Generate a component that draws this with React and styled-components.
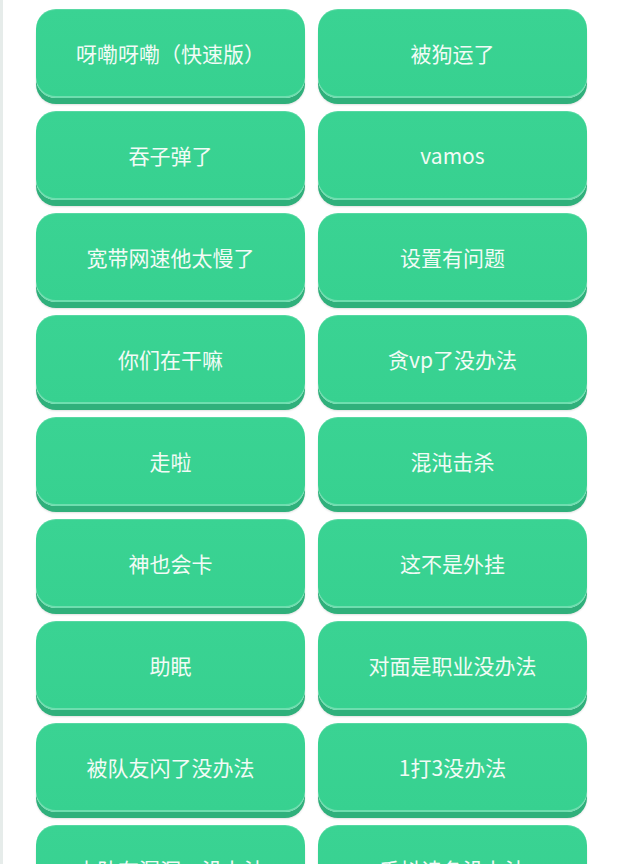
import React from 'react';
import styled, { createGlobalStyle } from 'styled-components';

const GlobalStyle = createGlobalStyle`
  html, body {
    margin: 0;
    padding: 0;
    background: #ffffff;
    overflow: hidden;
  }
  body {
    font-family: 'Noto Sans CJK SC', 'Noto Sans', sans-serif;
  }
`;

const Page = styled.div`
  height: 864px;
  border-left: 3px solid #e6ecea;
  box-sizing: border-box;
  overflow: hidden;
`;

const Grid = styled.div`
  display: grid;
  grid-template-columns: 269px 269px;
  column-gap: 13px;
  row-gap: 13px;
  padding: 9px 0 0 33px;
`;

const SoundButton = styled.button`
  height: 89px;
  padding: 0 0 2px;
  border: none;
  border-radius: 20px;
  background: linear-gradient(180deg, #3ad393 0%, #37d190 100%);
  color: #f2fbf6;
  font-family: inherit;
  font-size: 21px;
  font-weight: 400;
  cursor: pointer;
  box-shadow:
    inset 0 -2px 0 rgba(255, 255, 255, 0.28),
    inset 0 1px 0 rgba(255, 255, 255, 0.15),
    0 6px 0 #2fb07b,
    0 7px 2px rgba(0, 0, 0, 0.12);

  &:active {
    transform: translateY(3px);
  }
`;

const sounds = [
  '呀嘞呀嘞（快速版）',
  '被狗运了',
  '吞子弹了',
  'vamos',
  '宽带网速他太慢了',
  '设置有问题',
  '你们在干嘛',
  '贪vp了没办法',
  '走啦',
  '混沌击杀',
  '神也会卡',
  '这不是外挂',
  '助眠',
  '对面是职业没办法',
  '被队友闪了没办法',
  '1打3没办法',
  '本队有漏洞，没办法',
  '手抖读条没办法',
];

const App = () => (
  <Page>
    <GlobalStyle />
    <Grid>
      {sounds.map((name) => (
        <SoundButton key={name}>{name}</SoundButton>
      ))}
    </Grid>
  </Page>
);

export default App;
